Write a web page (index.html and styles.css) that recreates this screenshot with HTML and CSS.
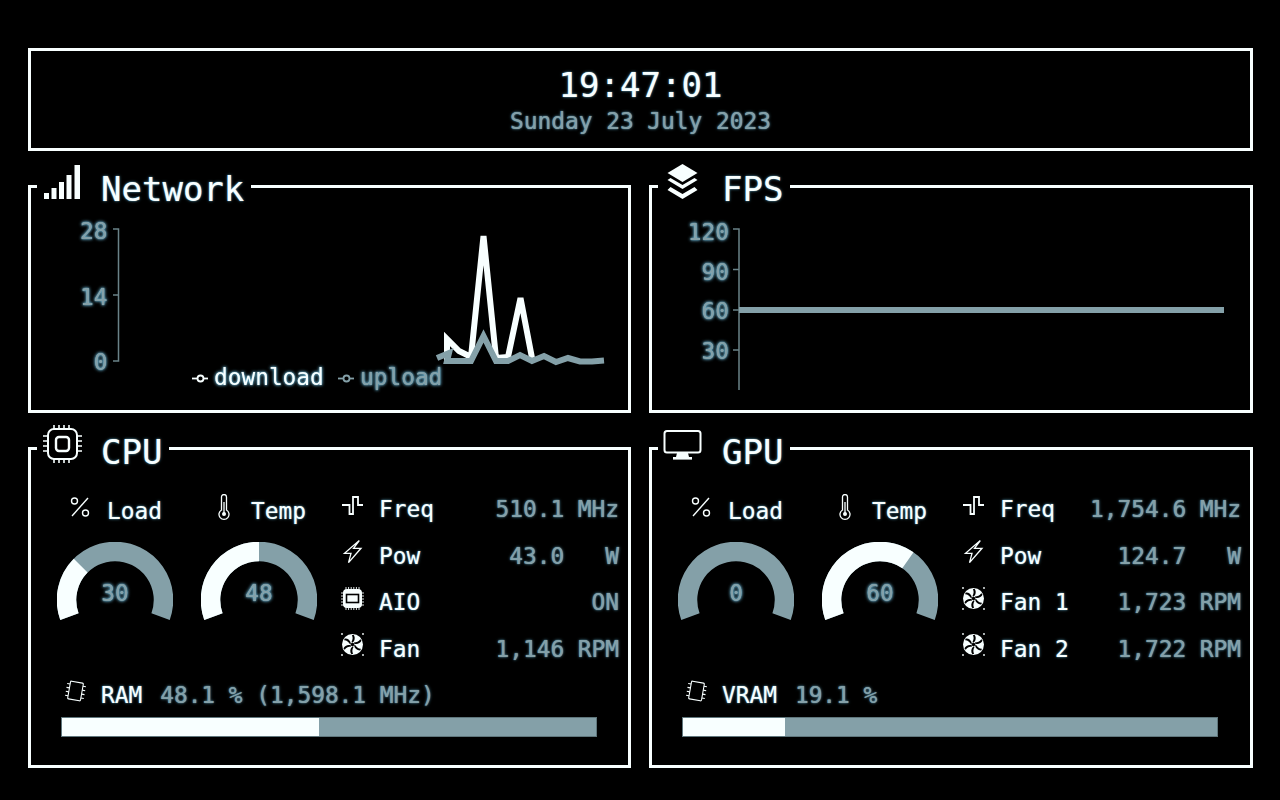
FILE: index.html
```html
<!DOCTYPE html>
<html lang="en">
<head>
<meta charset="utf-8">
<title>System Monitor</title>
<link rel="stylesheet" href="styles.css">
</head>
<body>
<svg class="sprite" aria-hidden="true">
  <defs>
    <filter id="glow" x="-30%" y="-30%" width="160%" height="160%">
      <feDropShadow dx="0" dy="0" stdDeviation="1.4" flood-color="#6fb8d8" flood-opacity="0.7"/>
    </filter>
    <symbol id="i-percent" viewBox="0 0 24 26">
      <g fill="none" stroke="#f8ffff" stroke-width="1.4">
        <path d="M20 4 L4 22"/>
        <circle cx="6.5" cy="7" r="3"/>
        <circle cx="17.5" cy="19" r="3"/>
      </g>
    </symbol>
    <symbol id="i-temp" viewBox="0 0 24 26">
      <g fill="none" stroke="#f8ffff" stroke-width="1.3">
        <path d="M9.5 16 V3 a2.5 2.5 0 0 1 5 0 V16 a5 5 0 1 1 -5 0 Z"/>
      </g>
      <path d="M12 8 V20" stroke="#f8ffff" stroke-width="1.3"/>
      <circle cx="12" cy="20" r="2" fill="#f8ffff"/>
    </symbol>
    <symbol id="i-freq" viewBox="0 0 23 23">
      <path d="M1 11 H8.5 V20 H12 V3 H17 V11 H22" fill="none" stroke="#f8ffff" stroke-width="1.8"/>
    </symbol>
    <symbol id="i-bolt" viewBox="0 0 23 23">
      <path d="M18.3 .6 L3.5 13.3 H10 L7.5 22.6 L20 8.3 H12.5 Z" fill="none" stroke="#f8ffff" stroke-width="1.3"/>
    </symbol>
    <symbol id="i-aio" viewBox="0 0 23 23">
      <path d="M5 0 V3 M7.6 0 V3 M10.2 0 V3 M12.8 0 V3 M15.4 0 V3 M18 0 V3 M5 20 V23 M7.6 20 V23 M10.2 20 V23 M12.8 20 V23 M15.4 20 V23 M18 20 V23 M0 6 H3 M0 9 H3 M0 12 H3 M0 15 H3 M0 18 H3 M20 6 H23 M20 9 H23 M20 12 H23 M20 15 H23 M20 18 H23" stroke="#f8ffff" stroke-width=".9"/>
      <rect x="2" y="2" width="19" height="19" rx="4" fill="#f8ffff"/>
      <rect x="5.5" y="7.5" width="12" height="8" fill="#f8ffff" stroke="#000" stroke-width="1.6"/>
    </symbol>
    <symbol id="i-fan" viewBox="0 0 23 23">
      <circle cx="11.5" cy="11.5" r="10.5" fill="#f8ffff"/>
      <g fill="#000">
        <path id="slit" d="M11.7 9.6 C14 7.6 14.4 4 12.6 1.7 L10.9 2.2 C12.2 4.6 11.6 7 10.4 9.3 Z"/>
        <use href="#slit" transform="rotate(60 11.5 11.5)"/>
        <use href="#slit" transform="rotate(120 11.5 11.5)"/>
        <use href="#slit" transform="rotate(180 11.5 11.5)"/>
        <use href="#slit" transform="rotate(240 11.5 11.5)"/>
        <use href="#slit" transform="rotate(300 11.5 11.5)"/>
        <circle cx="11.5" cy="11.5" r="1.8"/>
      </g>
      <g fill="#f8ffff">
        <circle cx="1" cy="1" r=".9"/>
        <circle cx="22" cy="1" r=".9"/>
        <circle cx="1" cy="22" r=".9"/>
        <circle cx="22" cy="22" r=".9"/>
      </g>
    </symbol>
    <symbol id="i-ram" viewBox="0 0 23 22">
      <g transform="rotate(10 11.5 11)" fill="none" stroke="#f8ffff" stroke-width="1.1">
        <rect x="5" y="2" width="13" height="18" rx="1"/>
        <path d="M5 5 H2 M5 9 H2 M5 13 H2 M5 17 H2 M18 5 H21 M18 9 H21 M18 13 H21 M18 17 H21"/>
      </g>
    </symbol>
  </defs>
</svg>

<main class="page">
  <header class="clock">
    <div class="clock-time">19:47:01</div>
    <div class="clock-date">Sunday 23 July 2023</div>
  </header>

  <div class="grid">
    <fieldset class="panel">
      <legend class="panel-title">
        <svg class="title-icon" viewBox="0 0 50 44">
          <g fill="#f8ffff">
            <rect x="7" y="30" width="5" height="6"/>
            <rect x="14.5" y="25" width="5" height="11"/>
            <rect x="22" y="19" width="5" height="17"/>
            <rect x="29.5" y="12" width="5" height="24"/>
            <rect x="37.5" y="2" width="5.5" height="34"/>
          </g>
        </svg>
        <span>Network</span>
      </legend>
      <svg class="chart" viewBox="31 206 597 204">
        <path class="axis" d="M113 229 H118.5 V361 H113 M113 295 H118.5"/>
        <g class="chart-text muted-fill" text-anchor="end">
          <text x="107.5" y="239">28</text>
          <text x="107.5" y="304.5">14</text>
          <text x="107.5" y="370">0</text>
        </g>
        <polyline class="line line-white" points="447,361 447,339 459,351 471,357 483.5,236 496,358 508,357 520.5,298 532,358"/>
        <polyline class="line line-grey" points="437,358 449,353 447,361 471,361 483.5,336 496,361 508,361 520,355 532,361 544,356 556,362 568,358 580,361.5 592,361.5 604,360.5"/>
        <g class="marker-white">
          <path d="M192 378.5 H208"/>
          <circle cx="200.5" cy="378.5" r="3"/>
        </g>
        <g class="marker-grey">
          <path d="M338 378.5 H354"/>
          <circle cx="346.5" cy="378.5" r="3"/>
        </g>
        <text class="chart-text white-fill" x="214" y="385">download</text>
        <text class="chart-text muted-fill" x="360" y="385">upload</text>
      </svg>
    </fieldset>

    <fieldset class="panel">
      <legend class="panel-title">
        <svg class="title-icon" viewBox="0 0 50 44">
          <g fill="#f8ffff">
            <path d="M24.5 1 L39.5 10 L24.5 19 L9.5 10 Z"/>
            <path d="M12.5 15 L24.5 22 L36.5 15 L39.5 17 L24.5 26 L9.5 17 Z"/>
            <path d="M12.5 24 L24.5 31 L36.5 24 L39.5 27 L24.5 36 L9.5 27 Z"/>
          </g>
        </svg>
        <span>FPS</span>
      </legend>
      <svg class="chart" viewBox="652 206 598 204">
        <path class="axis" d="M733 229 H739 V390 M733 269.5 H739 M733 310 H739 M733 350 H739"/>
        <g class="chart-text muted-fill" text-anchor="end">
          <text x="729" y="239.5">120</text>
          <text x="729" y="279.5">90</text>
          <text x="729" y="319">60</text>
          <text x="729" y="359">30</text>
        </g>
        <path class="line line-grey" d="M739 310 H1224"/>
      </svg>
    </fieldset>

    <fieldset class="panel panel-tall">
      <legend class="panel-title">
        <svg class="title-icon" viewBox="0 0 50 44">
          <rect x="11" y="4" width="29" height="30" rx="6" fill="none" stroke="#f8ffff" stroke-width="2"/>
          <rect x="19" y="12" width="13" height="14" rx="3" fill="none" stroke="#f8ffff" stroke-width="2.4"/>
          <path d="M6 11 H11 M6 16 H11 M6 21 H11 M6 26 H11 M40 11 H45 M40 16 H45 M40 21 H45 M40 26 H45 M17 0 V4 M22 0 V4 M27 0 V4 M32 0 V4 M17 34 V38 M22 34 V38 M27 34 V38 M32 34 V38" stroke="#f8ffff" stroke-width="1.6"/>
        </svg>
        <span>CPU</span>
      </legend>
      <div class="metrics">
        <div class="gauge">
          <div class="gauge-head"><svg class="head-icon"><use href="#i-percent"/></svg><span>Load</span></div>
          <svg class="gauge-dial" viewBox="0 0 116 90">
            <path class="arc arc-bg" d="M12.43 74.59 A48.5 48.5 0 1 1 103.57 74.59"/>
            <path class="arc arc-fg" d="M12.43 74.59 A48.5 48.5 0 1 1 103.57 74.59" pathLength="100" stroke-dasharray="29.5 100"/>
            <text class="chart-text muted-fill" x="58" y="59" text-anchor="middle">30</text>
          </svg>
        </div>
        <div class="gauge">
          <div class="gauge-head"><svg class="head-icon"><use href="#i-temp"/></svg><span>Temp</span></div>
          <svg class="gauge-dial" viewBox="0 0 116 90">
            <path class="arc arc-bg" d="M12.43 74.59 A48.5 48.5 0 1 1 103.57 74.59"/>
            <path class="arc arc-fg" d="M12.43 74.59 A48.5 48.5 0 1 1 103.57 74.59" pathLength="100" stroke-dasharray="50 100"/>
            <text class="chart-text muted-fill" x="58" y="59" text-anchor="middle">48</text>
          </svg>
        </div>
        <div class="stats">
          <div class="stat"><svg class="stat-icon"><use href="#i-freq"/></svg><span class="stat-label">Freq</span><span class="stat-num">510.1</span><span class="stat-unit">MHz</span></div>
          <div class="stat"><svg class="stat-icon"><use href="#i-bolt"/></svg><span class="stat-label">Pow</span><span class="stat-num">43.0</span><span class="stat-unit">W</span></div>
          <div class="stat"><svg class="stat-icon"><use href="#i-aio"/></svg><span class="stat-label">AIO</span><span class="stat-num"></span><span class="stat-unit">ON</span></div>
          <div class="stat"><svg class="stat-icon"><use href="#i-fan"/></svg><span class="stat-label">Fan</span><span class="stat-num">1,146</span><span class="stat-unit">RPM</span></div>
        </div>
      </div>
      <div class="mem">
        <svg class="mem-icon"><use href="#i-ram"/></svg>
        <span class="mem-label">RAM</span>
        <span class="mem-value">48.1 % (1,598.1 MHz)</span>
      </div>
      <div class="bar"><div class="bar-fill" style="width:48.1%"></div></div>
    </fieldset>

    <fieldset class="panel panel-tall">
      <legend class="panel-title">
        <svg class="title-icon" viewBox="0 0 50 44">
          <rect x="6.5" y="6" width="36" height="21.5" rx="2.5" fill="none" stroke="#f8ffff" stroke-width="2"/>
          <path d="M19 28 H30 L31 32 H18 Z" fill="#f8ffff"/>
          <rect x="15" y="32" width="19" height="2.6" fill="#f8ffff"/>
        </svg>
        <span>GPU</span>
      </legend>
      <div class="metrics">
        <div class="gauge">
          <div class="gauge-head"><svg class="head-icon"><use href="#i-percent"/></svg><span>Load</span></div>
          <svg class="gauge-dial" viewBox="0 0 116 90">
            <path class="arc arc-bg" d="M12.43 74.59 A48.5 48.5 0 1 1 103.57 74.59"/>
            <text class="chart-text muted-fill" x="58" y="59" text-anchor="middle">0</text>
          </svg>
        </div>
        <div class="gauge">
          <div class="gauge-head"><svg class="head-icon"><use href="#i-temp"/></svg><span>Temp</span></div>
          <svg class="gauge-dial" viewBox="0 0 116 90">
            <path class="arc arc-bg" d="M12.43 74.59 A48.5 48.5 0 1 1 103.57 74.59"/>
            <path class="arc arc-fg" d="M12.43 74.59 A48.5 48.5 0 1 1 103.57 74.59" pathLength="100" stroke-dasharray="66 100"/>
            <text class="chart-text muted-fill" x="58" y="59" text-anchor="middle">60</text>
          </svg>
        </div>
        <div class="stats">
          <div class="stat"><svg class="stat-icon"><use href="#i-freq"/></svg><span class="stat-label">Freq</span><span class="stat-num">1,754.6</span><span class="stat-unit">MHz</span></div>
          <div class="stat"><svg class="stat-icon"><use href="#i-bolt"/></svg><span class="stat-label">Pow</span><span class="stat-num">124.7</span><span class="stat-unit">W</span></div>
          <div class="stat"><svg class="stat-icon"><use href="#i-fan"/></svg><span class="stat-label">Fan 1</span><span class="stat-num">1,723</span><span class="stat-unit">RPM</span></div>
          <div class="stat"><svg class="stat-icon"><use href="#i-fan"/></svg><span class="stat-label">Fan 2</span><span class="stat-num">1,722</span><span class="stat-unit">RPM</span></div>
        </div>
      </div>
      <div class="mem">
        <svg class="mem-icon"><use href="#i-ram"/></svg>
        <span class="mem-label">VRAM</span>
        <span class="mem-value">19.1 %</span>
      </div>
      <div class="bar"><div class="bar-fill" style="width:19.1%"></div></div>
    </fieldset>
  </div>
</main>
</body>
</html>
```

FILE: styles.css
```css
html, body {
  margin: 0;
  height: 100%;
  background: #000;
  overflow: hidden;
}

body {
  font-family: "DejaVu Sans Mono", monospace;
  font-size: 22.8px;
  color: #f8ffff;
  text-shadow: 0 0 1px rgba(150, 215, 240, 0.7), 0 0 3px rgba(110, 200, 235, 0.65);
}

.sprite {
  position: absolute;
  width: 0;
  height: 0;
}

.page {
  padding: 48px 27px 0 28px;
}

.clock {
  height: 103px;
  box-sizing: border-box;
  border: 3px solid #f8ffff;
  padding-top: 14px;
  text-align: center;
}

.clock-time {
  font-size: 34px;
  line-height: 41.5px;
}

.clock-date {
  line-height: 28px;
  color: #84a0a8;
}

.grid {
  display: grid;
  grid-template-columns: 603px 604px;
  grid-template-rows: 246px 339px;
  column-gap: 18px;
  row-gap: 16px;
  margin-top: 16px;
}

.panel {
  margin: 0;
  padding: 0;
  min-width: 0;
  border: 3px solid #f8ffff;
}

.panel-title {
  display: flex;
  height: 39px;
  margin-left: 6px;
  padding: 0 7px 0 0;
  font-size: 34px;
  line-height: 44px;
}

.panel-tall .panel-title span {
  line-height: 46px;
}

.title-icon {
  width: 50px;
  height: 44px;
  margin: -4px 14px 0 0;
  flex: none;
}

.chart {
  display: block;
  width: 597px;
  height: 204px;
}

.panel:nth-child(2) .chart {
  width: 598px;
}

.chart-text {
  font-family: "DejaVu Sans Mono", monospace;
  font-size: 22.8px;
  filter: url(#glow);
}

.muted-fill { fill: #84a0a8; }
.white-fill { fill: #f8ffff; }

.axis {
  fill: none;
  stroke: #6a8288;
  stroke-width: 1.5;
}

.line {
  fill: none;
  stroke-width: 6;
  stroke-linejoin: miter;
}

.line-white { stroke: #f8ffff; }
.line-grey { stroke: #84a0a8; }

.marker-white, .marker-grey {
  fill: #000;
  stroke-width: 1.8;
}

.marker-white { stroke: #f8ffff; }
.marker-grey { stroke: #84a0a8; }

.metrics {
  display: flex;
  padding: 18px 9px 0 12px;
}

.gauge {
  width: 144px;
  flex: none;
}

.gauge-head {
  display: flex;
  justify-content: center;
  align-items: center;
  gap: 15px;
  height: 50px;
  line-height: 50px;
}

.head-icon {
  width: 24px;
  height: 26px;
  margin-bottom: 9px;
}

.gauge-dial {
  display: block;
  width: 116px;
  height: 90px;
  margin: 6px auto 0;
}

.arc {
  fill: none;
  stroke-width: 19.5;
}

.arc-bg { stroke: #84a0a8; }
.arc-fg { stroke: #f8ffff; }

.stats {
  flex: 1;
  min-width: 0;
  margin-left: 10px;
}

.stat {
  display: flex;
  align-items: center;
  height: 46.5px;
  line-height: 46.5px;
}

.stat-icon {
  width: 23px;
  height: 23px;
  margin: 0 15px 8px 0;
  flex: none;
}

.stat-label {
  flex: none;
}

.stat-num {
  flex: 1;
  text-align: right;
  color: #84a0a8;
}

.stat-unit {
  width: 3ch;
  margin-left: 1ch;
  text-align: right;
  color: #84a0a8;
}

.mem {
  display: flex;
  align-items: flex-start;
  height: 45px;
  line-height: 47.5px;
  padding-left: 33px;
}

.mem-icon {
  width: 23px;
  height: 22px;
  margin: 8px 14px 0 0;
  flex: none;
}

.mem-label {
  margin-right: 18px;
}

.mem-value {
  color: #84a0a8;
}

.bar {
  width: 536px;
  height: 20px;
  box-sizing: border-box;
  margin-left: 30px;
  border: 1px solid #5f767c;
  background: #84a0a8;
}

.bar-fill {
  height: 100%;
  background: #f8ffff;
}
```
